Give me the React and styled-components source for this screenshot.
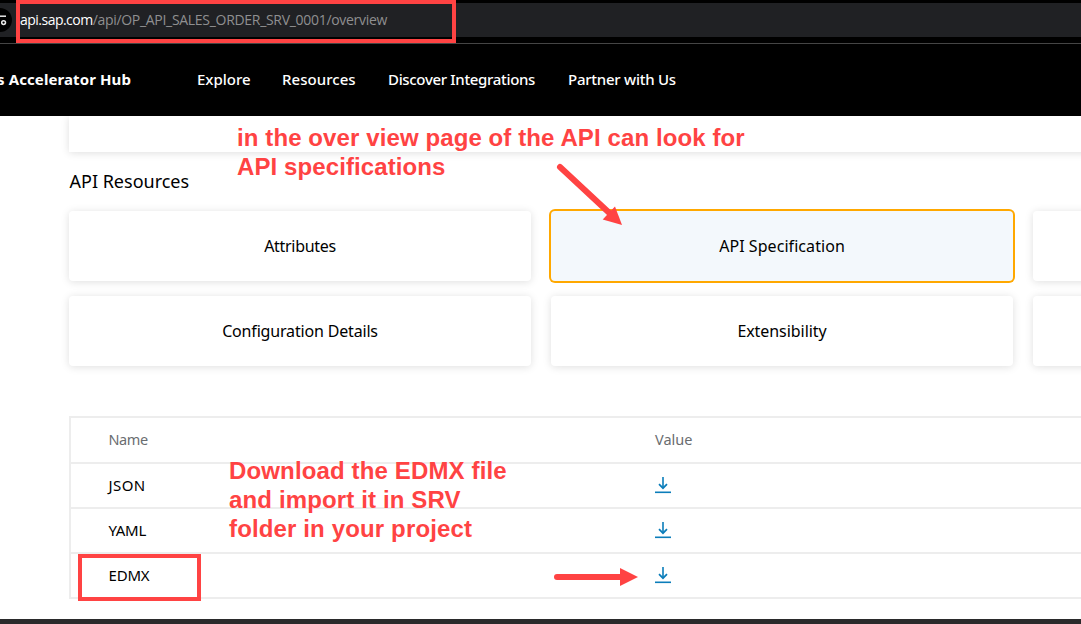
import React from "react";
import styled, { createGlobalStyle } from "styled-components";

const Global = createGlobalStyle`
  * { box-sizing: border-box; }
  body { margin: 0; overflow: hidden; background: #fff; }
`;

const RED = "#ff4343";
const ui = `"Noto Sans", "Open Sans", sans-serif`;

const Screen = styled.div`
  position: relative;
  width: 1081px;
  height: 624px;
  overflow: hidden;
  display: flex;
  flex-direction: column;
  background: #fff;
  color: #000;
  font-family: ${ui};
`;

const BrowserBar = styled.div`
  height: 44px;
  flex: none;
  background: #000;
  padding-top: 3px;
  border-bottom: 1px solid #454545;
`;

const Address = styled.div`
  display: flex;
  align-items: center;
  height: 34px;
  background: #202124;
`;

const SiteInfo = styled.div`
  width: 12px;
  height: 24px;
  flex: none;
  background: #000;
  border-radius: 0 12px 12px 0;
  margin-right: 8px;
  svg { display: block; }
`;

const Url = styled.div`
  font: 14px/20px "Open Sans", "Noto Sans", sans-serif;
  letter-spacing: -0.3px;
  color: #8f8f90;
  white-space: pre;
  span {
    color: #fff;
    letter-spacing: -0.52px;
  }
`;

const Header = styled.header`
  height: 72px;
  flex: none;
  background: #000;
  color: #fff;
  display: flex;
  align-items: center;
  padding-bottom: 2px;
`;

const Brand = styled.div`
  width: 131px;
  display: flex;
  justify-content: flex-end;
  white-space: pre;
  font-size: 15px;
  font-weight: 700;
  letter-spacing: 0.1px;
`;

const Nav = styled.nav`
  display: flex;
  gap: 32px;
  margin-left: 66px;
`;

const NavItem = styled.a`
  width: ${(p) => p.$w}px;
  white-space: nowrap;
  font-size: 15px;
  font-weight: 500;
  letter-spacing: ${(p) => p.$track}px;
`;

const Page = styled.main`
  height: 503px;
  flex: none;
  overflow: hidden;
  padding-left: 69px;
`;

const shadow = `box-shadow: 0 1px 8px rgba(0, 0, 0, 0.13);`;

const Summary = styled.section`
  height: 36px;
  width: 1100px;
  ${shadow}
`;

const Heading = styled.h2`
  margin: 16px 0 0;
  padding-left: 0.5px;
  height: 26px;
  font-size: 18px;
  line-height: 26px;
  font-weight: 400;
`;

const Tiles = styled.div`
  margin-top: 17px;
  display: grid;
  grid-template-columns: repeat(3, 462px);
  grid-auto-rows: 70px;
  gap: 15px 20px;
`;

const Tile = styled.div`
  display: flex;
  align-items: center;
  justify-content: center;
  border-radius: 4px;
  font-size: 16px;
  letter-spacing: ${(p) => p.$track || 0}px;
  background: ${(p) => (p.$active ? "#f3f8fc" : "#fff")};
  ${(p) => (p.$active ? "box-shadow: 0 0 0 2px #ffa800;" : shadow)}
`;

const Table = styled.div`
  margin-top: 50px;
  width: 1100px;
  border: 2px solid #ededed;
`;

const Row = styled.div`
  display: grid;
  grid-template-columns: 546.5px 1fr;
  align-items: center;
  height: ${(p) => (p.$head ? 46 : p.$last ? 43 : 45)}px;
  padding-left: 37.500px;
  border-bottom: ${(p) => (p.$last ? 0 : 2)}px solid #ededed;
  font-size: ${(p) => (p.$head ? 14.5 : 15)}px;
  color: ${(p) => (p.$head ? "#6a6d70" : "#000")};
`;

const Label = styled.span`
  padding-bottom: 2px;
  letter-spacing: ${(p) => p.$track || 0}px;
`;

const Taskbar = styled.div`
  height: 5px;
  flex: none;
  background: #2a2a2b;
`;

const Marker = styled.div`
  position: absolute;
  left: ${(p) => p.$x}px;
  top: ${(p) => p.$y}px;
  width: ${(p) => p.$w}px;
  height: ${(p) => p.$h}px;
  border: 4px solid ${RED};
`;

const Note = styled.div`
  position: absolute;
  left: ${(p) => p.$x}px;
  top: ${(p) => p.$y}px;
  white-space: pre;
  color: ${RED};
  font: bold 24px/29px "Liberation Sans", Arial, sans-serif;
  letter-spacing: ${(p) => p.$track}px;
`;

const Arrows = styled.svg`
  position: absolute;
  inset: 0;
  pointer-events: none;
`;

const DownloadSvg = styled.svg`
  display: block;
  margin-top: -1px;
`;

const Download = () => (
  <DownloadSvg width="16" height="17" viewBox="0 0 16 17" fill="none" stroke="#0b7dba">
    <path d="M8 0v11" strokeWidth="1.6" />
    <path d="M4 7.2 8 11.2 12 7.2" strokeWidth="1.7" />
    <path d="M0 15.3h16" strokeWidth="1.6" />
  </DownloadSvg>
);

export default function App() {
  return (
    <Screen>
      <Global />
      <BrowserBar>
        <Address>
          <SiteInfo>
            <svg width="12" height="24" viewBox="0 0 12 24" fill="none" stroke="#e8e8e8" strokeWidth="1.5">
              <path d="M0 8.200h6" />
              <circle cx="3.6" cy="14.600" r="1.9" />
            </svg>
          </SiteInfo>
          <Url><span>api.sap.com</span>/api/OP_API_SALES_ORDER_SRV_0001/overview</Url>
        </Address>
      </BrowserBar>
      <Header>
        <Brand>s Accelerator Hub</Brand>
        <Nav>
          <NavItem $w={53} $track={0}>Explore</NavItem>
          <NavItem $w={74} $track={0.05}>Resources</NavItem>
          <NavItem $w={148} $track={-0.33}>Discover Integrations</NavItem>
          <NavItem $w={110} $track={-0.25}>Partner with Us</NavItem>
        </Nav>
      </Header>
      <Page>
        <Summary />
        <Heading>API Resources</Heading>
        <Tiles>
          <Tile $track={-0.3}>Attributes</Tile>
          <Tile $active $track={0.06}>API Specification</Tile>
          <Tile />
          <Tile $track={-0.17}>Configuration Details</Tile>
          <Tile $track={-0.06}>Extensibility</Tile>
          <Tile />
        </Tiles>
        <Table>
          <Row $head><Label $track={-0.4}>Name</Label><Label>Value</Label></Row>
          <Row><Label $track={0.4}>JSON</Label><Download /></Row>
          <Row><Label $track={-0.3}>YAML</Label><Download /></Row>
          <Row $last><Label $track={-0.2}>EDMX</Label><Download /></Row>
        </Table>
      </Page>
      <Taskbar />
      <Marker $x={16} $y={0} $w={440} $h={43} />
      <Marker $x={78} $y={554} $w={123} $h={47} />
      <Note $x={237} $y={123} $track={0.1}>{"in the over view page of the API can look for\nAPI specifications"}</Note>
      <Note $x={229} $y={456} $track={0.14}>{"Download the EDMX file\nand import it in SRV\nfolder in your project"}</Note>
      <Arrows width="1081" height="624" fill={RED} stroke="none">
        <path d="M560 167 611 214.500" stroke={RED} strokeWidth="6" strokeLinecap="round" />
        <path d="M615 206.500 622 225 602.700 219.500Z" />
        <path d="M557 577H621" stroke={RED} strokeWidth="6" strokeLinecap="round" />
        <path d="M620 568 638 577 620 586Z" />
      </Arrows>
    </Screen>
  );
}
